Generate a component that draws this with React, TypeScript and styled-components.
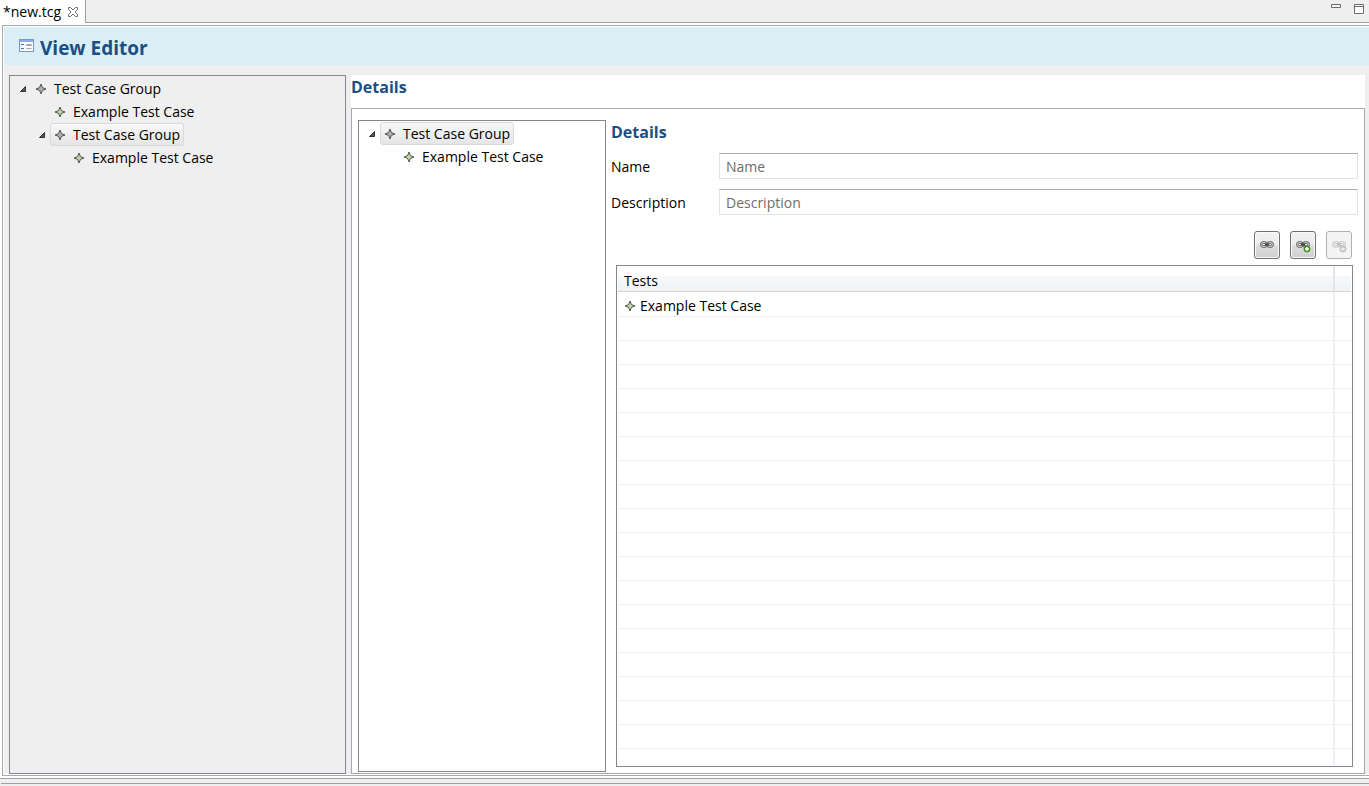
import React, { useId, useState } from "react";
import styled, { createGlobalStyle } from "styled-components";

const GlobalStyle = createGlobalStyle`
  *, *::before, *::after { box-sizing: border-box; }
  html, body, #root { height: 100%; }
  body {
    margin: 0;
    background: #efefef;
    color: #000;
    font: 14px/20px "Open Sans", "Noto Sans", sans-serif;
  }
  button, input { font: inherit; color: inherit; }
`;

const Page = styled.div`
  display: flex;
  flex-direction: column;
  height: 100vh;
  min-height: 420px;
`;

const TabBar = styled.div`
  display: flex;
  flex: none;
  height: 23px;
`;

const Tab = styled.div`
  display: flex;
  align-items: center;
  gap: 6px;
  width: 86px;
  padding-left: 3px;
  background: #fff;
  border-right: 1px solid #9d9fa1;
  white-space: nowrap;
`;

const TabActions = styled.div`
  display: flex;
  flex: 1;
  justify-content: flex-end;
  align-items: flex-start;
  gap: 11px;
  padding: 3px 4px 0 0;
  border-bottom: 1px solid #9d9fa1;
`;

const IconButton = styled.button`
  display: flex;
  padding: 0;
  border: 0;
  background: none;
`;

const EditorArea = styled.main`
  display: flex;
  flex: 1;
  flex-direction: column;
  min-height: 0;
  padding: 2px 0 2px 2px;
  background: #fff;
  border-bottom: 1px solid #9fa0a0;
`;

const EditorFrame = styled.div`
  display: flex;
  flex: 1;
  flex-direction: column;
  min-height: 0;
  padding: 1px 0 1px 1px;
  border: 1px solid #a7a9ac;
  border-right: 0;
`;

const FormHeader = styled.header`
  display: flex;
  flex: none;
  align-items: flex-start;
  gap: 6px;
  height: 38px;
  padding: 9px 0 0 15px;
  background: #daeff5;

  svg { margin-top: 3px; }
`;

const Title = styled.h1`
  margin: 0;
  color: #1b4f83;
  font-size: 19px;
  line-height: 24px;
`;

const FormBody = styled.div`
  display: grid;
  flex: 1;
  grid-template-columns: 337fr 1014fr;
  grid-template-rows: minmax(0, 1fr);
  gap: 5px;
  min-height: 0;
  padding: 10px 4px 0 5px;
  background: #efefef;
`;

const Section = styled.section`
  display: flex;
  flex-direction: column;
  min-width: 0;
  min-height: 0;
  background: #fff;
`;

const SectionTitle = styled.h2`
  flex: none;
  margin: 0;
  color: #1b4f83;
  font-size: 16px;
  line-height: 24px;
`;

const SectionBox = styled.div`
  display: grid;
  flex: 1;
  grid-template-columns: 248fr 747fr;
  grid-template-rows: minmax(0, 1fr);
  gap: 5px;
  min-height: 0;
  margin-top: 9px;
  padding: 11px 6px 1px;
  border: 1px solid #a7a9ac;
`;

const TreeBox = styled.ul<{ $filled?: boolean }>`
  min-width: 0;
  margin: 0;
  padding: 1px 0;
  overflow: hidden;
  list-style: none;
  background: ${(p) => (p.$filled ? "#efefef" : "#fff")};
  border: 1px solid #828790;
`;

const TreeRow = styled.li<{ $level: number }>`
  display: flex;
  height: 23px;
  padding-left: ${(p) => p.$level * 19}px;
`;

const Twisty = styled.span`
  display: flex;
  flex: none;
  align-items: center;
  justify-content: center;
  width: 21px;
  padding-left: 5px;
`;

const TreeLabel = styled.button<{ $selected: boolean }>`
  display: flex;
  align-items: center;
  gap: 7px;
  padding: 0 3px;
  border: 1px solid ${(p) => (p.$selected ? "#d9d9d9" : "transparent")};
  border-radius: 3px;
  background: ${(p) => (p.$selected ? "linear-gradient(#f8f8f8, #e5e5e5)" : "none")};
  white-space: nowrap;
`;

const Details = styled.div`
  display: flex;
  flex-direction: column;
  min-width: 0;
  min-height: 0;
`;

const Field = styled.div`
  display: flex;
  flex: none;
  align-items: center;
  height: 26px;
  margin: 9px 0 1px;
`;

const FieldLabel = styled.label`
  width: 108px;
  padding-top: 2px;
`;

const TextInput = styled.input`
  flex: 1;
  min-width: 0;
  height: 26px;
  padding: 0 6px;
  background: #fff;
  border: 1px solid #e2e3ea;
  border-top-color: #abadb3;
  &::placeholder { color: #6d6d6d; opacity: 1; }
`;

const ButtonRow = styled.div`
  display: flex;
  flex: none;
  justify-content: flex-end;
  gap: 10px;
  margin: 15px 6px 6px;
`;

const ToolButton = styled.button`
  display: flex;
  align-items: center;
  justify-content: center;
  width: 26px;
  height: 28px;
  padding: 0;
  border: 1px solid #707070;
  border-radius: 3px;
  background: linear-gradient(#f2f2f2, #ebebeb 50%, #dddddd 50%, #cfcfcf);
  box-shadow: inset 0 0 0 1px #fafafa;
  &:disabled {
    border-color: #adb2b5;
    background: #f4f4f4;
    box-shadow: none;
  }
`;

const TableBox = styled.div`
  flex: 1;
  min-height: 0;
  margin: 0 5px 5px;
  padding: 0 1px;
  overflow: hidden;
  border: 1px solid #828790;
`;

const Table = styled.table`
  width: 100%;
  table-layout: fixed;
  border-spacing: 0;
`;

const HeadCell = styled.th<{ $narrow?: boolean }>`
  width: ${(p) => (p.$narrow ? "16px" : "auto")};
  height: 26px;
  padding: ${(p) => (p.$narrow ? "0" : "4px 6px 0")};
  font-weight: normal;
  text-align: left;
  background: linear-gradient(#fff 40%, #f7f8fa 40%, #f1f2f4);
  border-bottom: 1px solid #d5d5d5;
  border-right: ${(p) => (p.$narrow ? "0" : "2px solid #e4e5e8")};
`;

const Cell = styled.td<{ $last?: boolean }>`
  height: 24px;
  padding: 0 6px;
  border-bottom: 1px solid #f0f0f0;
  border-right: ${(p) => (p.$last ? "0" : "2px solid #edf1f6")};
`;

const CellContent = styled.span`
  display: flex;
  align-items: center;
  gap: 4px;
  height: 24px;
  padding-top: 4px;
`;

const StatusBar = styled.footer`
  flex: none;
  height: 7px;
  padding-top: 4px;
  background: #f0f0ee;
  &::after {
    content: "";
    display: block;
    height: 3px;
    margin-left: 1px;
    background: #efefef;
    border-top: 1px solid #9fa0a0;
  }
`;

function StarIcon({ green = false }: { green?: boolean }) {
  return (
    <svg width="12" height="12" viewBox="0 0 12 12" aria-hidden="true">
      <path
        d="M6 1 7.400 4.600 11 6 7.400 7.400 6 11 4.600 7.400 1 6 4.600 4.600Z"
        fill={green ? "#c0d8a4" : "#b0b0b0"}
        stroke="#555"
        strokeWidth="1"
      />
    </svg>
  );
}

function ExpandedIcon() {
  return (
    <svg width="8" height="8" viewBox="0 0 8 8" aria-hidden="true">
      <path d="M6.500 1.500v5h-5Z" fill="#595959" stroke="#333" />
    </svg>
  );
}

function CloseIcon() {
  return (
    <svg width="12" height="12" viewBox="0 0 12 12" aria-hidden="true">
      <path
        d="M1.500 1.500h2L6 4l2.500-2.500h2v2L8 6l2.500 2.500v2h-2L6 8l-2.500 2.500h-2v-2L4 6 1.500 3.500Z"
        fill="#fff"
        stroke="#6b6b6b"
      />
    </svg>
  );
}

function FormIcon() {
  return (
    <svg width="15" height="13" viewBox="0 0 15 13" aria-hidden="true">
      <rect x=".5" y=".5" width="14" height="12" fill="#f8fbff" stroke="#7c98c8" />
      <path d="M1 1h13v2H1z" fill="#8dabdc" />
      <path d="M2 5.500h3M2 9.500h3" stroke="#4a6fb8" />
      <path d="M7.500 5.500h5v1h-5zM7.500 9.500h5" fill="none" stroke="#a5a5a5" />
    </svg>
  );
}

function ChainIcon({ badge, muted = false }: { badge?: "add" | "remove"; muted?: boolean }) {
  const dark = muted ? "#c4c4c4" : "#666";
  const light = muted ? "#ececec" : "#c4c4c4";
  return (
    <svg width="16" height="16" viewBox="0 0 16 16" aria-hidden="true">
      <rect x="1.500" y="4.500" width="7" height="6" rx="3" fill={light} stroke={dark} />
      <rect x="7.500" y="4.500" width="7" height="6" rx="3" fill={light} stroke={dark} />
      <rect x="3.500" y="6.500" width="9" height="2" rx="1" fill={muted ? "#f4f4f4" : "#eee"} stroke={dark} />
      <path d="M6 7.500h4" stroke={muted ? dark : "#444"} strokeWidth="1.400" />
      {badge && (
        <>
          <circle cx="12" cy="12" r="3" fill={badge === "add" ? "#58a82a" : "#d0d0d0"} stroke={badge === "add" ? "#3c8518" : "#bcbcbc"} />
          <path d={badge === "add" ? "M10 12h4M12 10v4" : "M10.500 12h3"} stroke="#fff" strokeWidth="1.400" />
        </>
      )}
    </svg>
  );
}

interface TreeNode {
  label: string;
  level: number;
  group?: boolean;
}

const outline: TreeNode[] = [
  { label: "Test Case Group", level: 0, group: true },
  { label: "Example Test Case", level: 1 },
  { label: "Test Case Group", level: 1, group: true },
  { label: "Example Test Case", level: 2 },
];

const detailOutline: TreeNode[] = [
  { label: "Test Case Group", level: 0, group: true },
  { label: "Example Test Case", level: 1 },
];

function Tree({ nodes, initial, filled }: { nodes: TreeNode[]; initial: number; filled?: boolean }) {
  const [selected, setSelected] = useState(initial);
  return (
    <TreeBox $filled={filled}>
      {nodes.map((node, i) => (
        <TreeRow key={i} $level={node.level}>
          <Twisty>{node.group && <ExpandedIcon />}</Twisty>
          <TreeLabel type="button" $selected={i === selected} onClick={() => setSelected(i)}>
            <StarIcon green={!node.group} />
            {node.label}
          </TreeLabel>
        </TreeRow>
      ))}
    </TreeBox>
  );
}

function TextField({ label }: { label: string }) {
  const id = useId();
  return (
    <Field>
      <FieldLabel htmlFor={id}>{label}</FieldLabel>
      <TextInput id={id} type="text" placeholder={label} />
    </Field>
  );
}

const EMPTY_ROWS = 60;

export default function App() {
  return (
    <>
      <GlobalStyle />
      <Page>
        <TabBar>
          <Tab>
            *new.tcg
            <IconButton type="button" aria-label="Close">
              <CloseIcon />
            </IconButton>
          </Tab>
          <TabActions>
            <IconButton type="button" aria-label="Minimize">
              <svg width="12" height="12" viewBox="0 0 12 12" aria-hidden="true">
                <path d="M1.500 1.500h9v3h-9z" fill="#fff" stroke="#6b6b6b" />
              </svg>
            </IconButton>
            <IconButton type="button" aria-label="Maximize">
              <svg width="12" height="12" viewBox="0 0 12 12" aria-hidden="true">
                <path d="M1.500 1.500h9v9h-9zM1.500 3.500h9" fill="#fff" stroke="#6b6b6b" />
              </svg>
            </IconButton>
          </TabActions>
        </TabBar>
        <EditorArea>
          <EditorFrame>
            <FormHeader>
              <FormIcon />
              <Title>View Editor</Title>
            </FormHeader>
            <FormBody>
              <Tree nodes={outline} initial={2} filled />
              <Section>
                <SectionTitle>Details</SectionTitle>
                <SectionBox>
                  <Tree nodes={detailOutline} initial={0} />
                  <Details>
                    <SectionTitle>Details</SectionTitle>
                    <TextField label="Name" />
                    <TextField label="Description" />
                    <ButtonRow>
                      <ToolButton type="button" aria-label="Link">
                        <ChainIcon />
                      </ToolButton>
                      <ToolButton type="button" aria-label="Add link">
                        <ChainIcon badge="add" />
                      </ToolButton>
                      <ToolButton type="button" aria-label="Remove link" disabled>
                        <ChainIcon badge="remove" muted />
                      </ToolButton>
                    </ButtonRow>
                    <TableBox>
                      <Table>
                        <thead>
                          <tr>
                            <HeadCell>Tests</HeadCell>
                            <HeadCell $narrow />
                          </tr>
                        </thead>
                        <tbody>
                          <tr>
                            <Cell>
                              <CellContent>
                                <StarIcon green />
                                Example Test Case
                              </CellContent>
                            </Cell>
                            <Cell $last />
                          </tr>
                          {Array.from({ length: EMPTY_ROWS }, (_, i) => (
                            <tr key={i}>
                              <Cell />
                              <Cell $last />
                            </tr>
                          ))}
                        </tbody>
                      </Table>
                    </TableBox>
                  </Details>
                </SectionBox>
              </Section>
            </FormBody>
          </EditorFrame>
        </EditorArea>
        <StatusBar />
      </Page>
    </>
  );
}
